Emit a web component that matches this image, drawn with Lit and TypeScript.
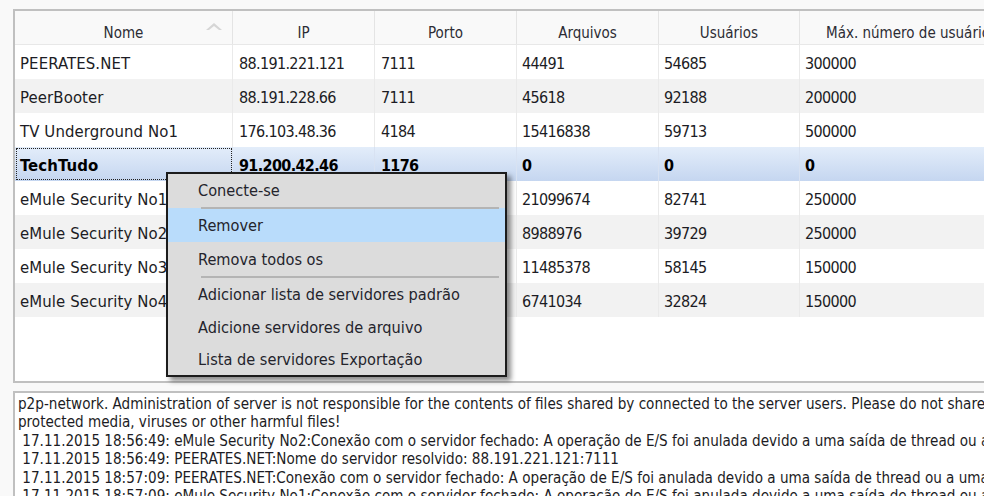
import { LitElement, html, css } from 'lit';
import { customElement } from 'lit/decorators.js';

const COLUMNS = ['Nome', 'IP', 'Porto', 'Arquivos', 'Usuários', 'Máx. número de usuários'];

const ROWS = [
  ['PEERATES.NET', '88.191.221.121', '7111', '44491', '54685', '300000'],
  ['PeerBooter', '88.191.228.66', '7111', '45618', '92188', '200000'],
  ['TV Underground No1', '176.103.48.36', '4184', '15416838', '59713', '500000'],
  ['TechTudo', '91.200.42.46', '1176', '0', '0', '0'],
  ['eMule Security No1', '', '', '21099674', '82741', '250000'],
  ['eMule Security No2', '', '', '8988976', '39729', '250000'],
  ['eMule Security No3', '', '', '11485378', '58145', '150000'],
  ['eMule Security No4', '', '', '6741034', '32824', '150000'],
];

const LOG = [
  'p2p-network. Administration of server is not responsible for the contents of files shared by connected to the server users. Please do not share copyrighted',
  'protected media, viruses or other harmful files!',
  ' 17.11.2015 18:56:49: eMule Security No2:Conexão com o servidor fechado: A operação de E/S foi anulada devido a uma saída de thread ou a uma solicitação',
  ' 17.11.2015 18:56:49: PEERATES.NET:Nome do servidor resolvido: 88.191.221.121:7111',
  ' 17.11.2015 18:57:09: PEERATES.NET:Conexão com o servidor fechado: A operação de E/S foi anulada devido a uma saída de thread ou a uma solicitação',
  ' 17.11.2015 18:57:09: eMule Security No1:Conexão com o servidor fechado: A operação de E/S foi anulada devido a uma saída de thread ou a uma solicitação',
];

@customElement('app-root')
export class AppRoot extends LitElement {
  static styles = css`
    :host {
      display: block;
      width: 984px;
      height: 496px;
      overflow: hidden;
      background: #f9f9f9;
      font-family: 'DejaVu Sans Condensed', 'DejaVu Sans', sans-serif;
      font-stretch: condensed;
      font-size: 16px;
      color: #1c1c24;
    }
    .page {
      position: relative;
      display: flex;
      flex-direction: column;
      height: 496px;
      padding: 9px 0 0 13px;
      box-sizing: border-box;
    }
    .list {
      height: 374px;
      box-sizing: border-box;
      border: solid #c0c0c0;
      border-width: 2px 0 2px 2px;
      background: #fff;
      overflow: hidden;
    }
    .row {
      display: grid;
      grid-template-columns: 218px 142px 142px 142px 141px 224px;
      height: 34px;
      width: 1009px;
    }
    .row.head {
      background: #f9f9f9;
      border-bottom: 1px solid #e8e8e8;
      box-sizing: border-box;
    }
    .row.even { background: #f2f2f2; }
    .row.sel {
      background: linear-gradient(#e3edfa, #c5d6f0);
      font-weight: bold;
      color: #000;
    }
    .cell {
      display: flex;
      align-items: center;
      padding: 2px 0 0 5px;
      white-space: nowrap;
      overflow: hidden;
      border-right: 1px solid #eaeaea;
      box-sizing: border-box;
      letter-spacing: -0.65px;
    }
    .cell.name {
      font-size: 16.6px;
      letter-spacing: 0.1px;
    }
    .cell.pad { padding-left: 6px; }
    .row.sel .cell { border-right-color: #d8e2f2; }
    .head .cell {
      justify-content: center;
      padding: 10px 0 0;
      font-size: 15px;
      letter-spacing: 0;
      color: #2c2c34;
      border-right-color: #e4e4e4;
      position: relative;
    }
    .row.sel .cell.focus {
      outline: 1px dotted #222;
      outline-offset: -2px;
    }
    .sort {
      position: absolute;
      left: 190px;
      top: 11px;
    }
    .log {
      margin-top: 8px;
      flex: 1;
      box-sizing: border-box;
      border: solid #c0c0c0;
      border-width: 2px 0 0 2px;
      background: #fff;
      padding: 2px 0 0 3px;
      font-size: 15.1px;
      line-height: 18.4px;
      white-space: pre;
      overflow: hidden;
      color: #1c1c24;
    }
    .menu {
      position: absolute;
      left: 166px;
      top: 172px;
      width: 341px;
      height: 205px;
      box-sizing: border-box;
      border: 2px solid #1c1c1c;
      background: #dcdcdc;
      box-shadow: 4px 4px 5px rgba(0, 0, 0, 0.45);
      display: flex;
      flex-direction: column;
      font-size: 16.2px;
    }
    .item {
      height: 34px;
      box-sizing: border-box;
      flex: none;
      display: flex;
      align-items: center;
      padding-left: 30px;
      white-space: nowrap;
      color: #24242c;
    }
    .item.first { padding-bottom: 2px; }
    .item.hot { background: #b9dcfb; }
    .item.short { height: 33px; }
    .item.last { height: 32px; padding-top: 1px; }
    .sep {
      height: 2px;
      flex: none;
      margin: -1px 6px -1px 33px;
      background: #b4b4b4;
      position: relative;
    }
    .sep.low { margin: 0 6px 0 33px; }
  `;

  private renderRow(row: string[], i: number) {
    const sel = i === 3;
    const cls = `row ${sel ? 'sel' : i % 2 === 1 ? 'even' : ''}`;
    return html`<div class=${cls}>
      ${row.map((v, c) => {
        const kind = c === 0 ? 'name' : c < 3 ? 'pad' : '';
        return html`<div class="cell ${kind} ${sel && c === 0 ? 'focus' : ''}">${v}</div>`;
      })}
    </div>`;
  }

  render() {
    return html`<div class="page">
      <div class="list">
        <div class="row head">
          ${COLUMNS.map(
            (c, i) => html`<div class="cell">
              ${c}
              ${i === 0
                ? html`<svg class="sort" width="18" height="9" viewBox="0 0 18 9">
                    <path d="M1 8 L9 1 L17 8 L14 8 L9 4 L4 8 Z" fill="#d6d6d6" />
                  </svg>`
                : ''}
            </div>`,
          )}
        </div>
        ${ROWS.map((r, i) => this.renderRow(r, i))}
      </div>
      <div class="log">${LOG.join('\n')}</div>
      <div class="menu">
        <div class="item first">Conecte-se</div>
        <div class="sep"></div>
        <div class="item hot">Remover</div>
        <div class="item">Remova todos os</div>
        <div class="sep low"></div>
        <div class="item short">Adicionar lista de servidores padrão</div>
        <div class="item last">Adicione servidores de arquivo</div>
        <div class="item last">Lista de servidores Exportação</div>
      </div>
    </div>`;
  }
}
